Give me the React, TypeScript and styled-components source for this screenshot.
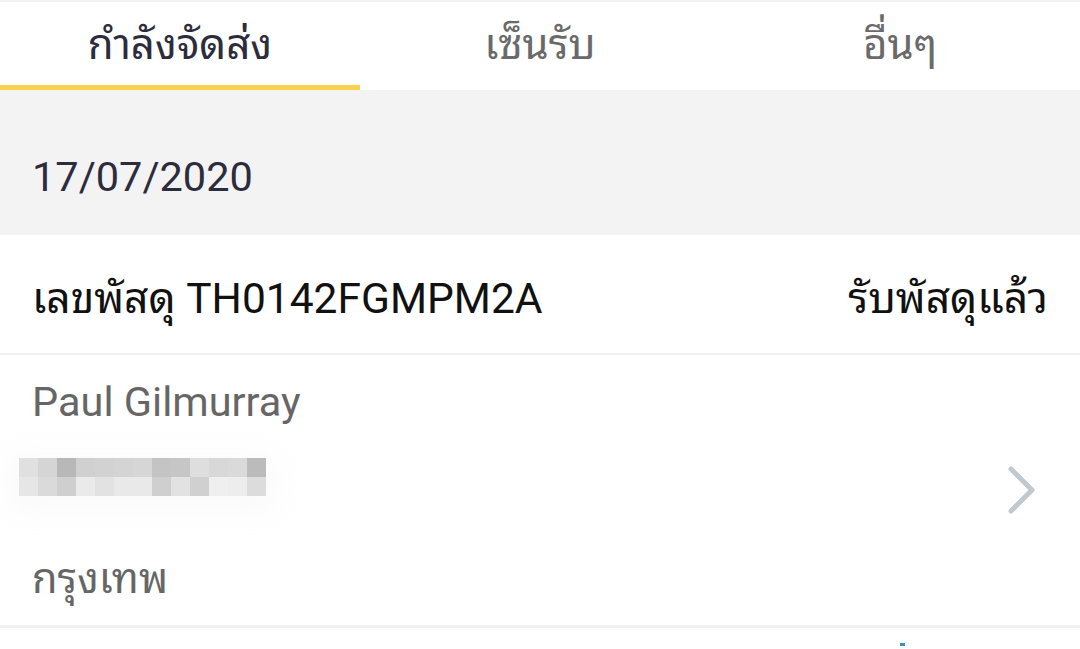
import styled, { createGlobalStyle } from "styled-components";

const GlobalStyle = createGlobalStyle`
    html, body {
        margin: 0;
        padding: 0;
        background: #ffffff;
        font-family: Roboto, "Noto Sans Thai Looped", "Noto Sans Thai UI", "Droid Sans Thai", Loma, Garuda, "Noto Sans Thai", sans-serif;
    }
    * {
        box-sizing: border-box;
    }
`

const tabs = ["กำลังจัดส่ง", "เซ็นรับ", "อื่นๆ"];

const blurRows = [
    ["#e0e0e0", "#d5d5d5", "#b8b8b8", "#d0d0d0", "#d2d2d2", "#d4d4d4", "#d6d6d6", "#c4c4c4", "#c6c6c6", "#dedede", "#d8d8d8", "#dadada", "#bbbbbb"],
    ["#e6e6e6", "#dadada", "#cfcfcf", "#eaeaea", "#e2e2e2", "#e9e9e9", "#e9e9e9", "#cfcfcf", "#e2e2e2", "#d0d0d0", "#efefef", "#ededed", "#dcdcdc"],
];

export default function App() {
    return (
        <>
            <GlobalStyle/>
            <Page>
                <TabBar>
                    {tabs.map((t, i) => (
                        <Tab key={t} $active={i === 0}>{t}</Tab>
                    ))}
                </TabBar>
                <DateHeader>17/07/2020</DateHeader>
                <ParcelRow>
                    <ParcelNo>เลขพัสดุ TH0142FGMPM2A</ParcelNo>
                    <Status>รับพัสดุแล้ว</Status>
                </ParcelRow>
                <AddressRow>
                    <AddressInfo>
                        <Name>Paul Gilmurray</Name>
                        <Redacted>
                            {blurRows.flat().map((c, i) => (
                                <Pixel key={i} $color={c}/>
                            ))}
                        </Redacted>
                        <City>กรุงเทพ</City>
                    </AddressInfo>
                    <Chevron width="30" height="50" viewBox="0 0 30 50">
                        <polyline points="4,4 25,25 4,46" fill="none" stroke="#c0c9d0" strokeWidth="5"
                                  strokeLinecap="round" strokeLinejoin="round"/>
                    </Chevron>
                </AddressRow>
                <Footer>
                    <Dot/>
                </Footer>
            </Page>
        </>
    );
}

const Page = styled.div`
    width: 1080px;
    height: 649px;
    overflow: hidden;
    background: #ffffff;
    border-top: 2px solid #f2f2f2;
`
const TabBar = styled.div`
    display: grid;
    grid-template-columns: repeat(3, 1fr);
    height: 88px;
    background: #ffffff;
`
const Tab = styled.div<{ $active: boolean }>`
    display: flex;
    align-items: center;
    justify-content: center;
    font-size: 42px;
    color: ${p => p.$active ? "#2c2c3c" : "#6a6a6a"};
    border-bottom: 5px solid ${p => p.$active ? "#fcd04f" : "transparent"};
    padding-bottom: 8px;
`
const DateHeader = styled.div`
    height: 145px;
    background: #f3f3f3;
    padding: 62px 0 0 32px;
    font-size: 41.5px;
    line-height: 50px;
    color: #2c2c3c;
`
const ParcelRow = styled.div`
    display: flex;
    align-items: center;
    justify-content: space-between;
    height: 120px;
    padding: 0 32px 0 32px;
    border-bottom: 2px solid #f0f0f0;
    font-size: 42.5px;
    color: #111111;
`
const ParcelNo = styled.span``
const Status = styled.span``

const AddressRow = styled.div`
    display: flex;
    align-items: center;
    justify-content: space-between;
    height: 273px;
    padding: 0 43px 0 32px;
    border-bottom: 3px solid #f2f2f2;
`
const AddressInfo = styled.div`
    display: flex;
    flex-direction: column;
    align-self: stretch;
    padding-top: 22px;
`
const Name = styled.div`
    font-size: 41.5px;
    line-height: 50px;
    color: #666666;
`
const Redacted = styled.div`
    display: grid;
    grid-template-columns: repeat(13, 19px);
    grid-auto-rows: 19px;
    margin: 31px 0 0 -13px;
    width: max-content;
    box-shadow: 0 6px 30px 10px rgba(250, 250, 250, 0.9);
`
const Pixel = styled.div<{ $color: string }>`
    background: ${p => p.$color};
`
const City = styled.div`
    margin-top: 58px;
    font-size: 41.5px;
    line-height: 50px;
    color: #666666;
`
const Chevron = styled.svg`
    display: block;
`
const Footer = styled.div`
    position: relative;
    height: 30px;
`
const Dot = styled.div`
    position: absolute;
    left: 900px;
    top: 15px;
    width: 5px;
    height: 3px;
    background: #3a8fc8;
`
